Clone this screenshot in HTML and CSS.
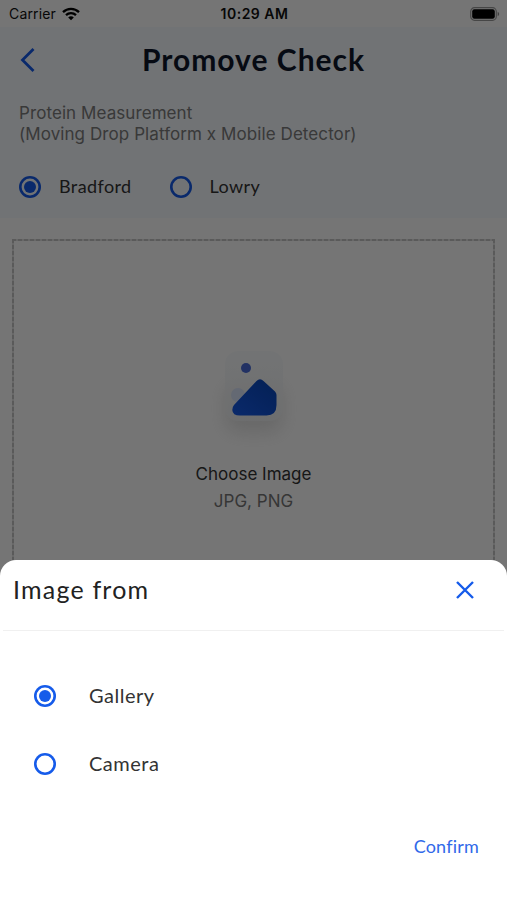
FILE: index.html
```html
<!DOCTYPE html>
<html lang="en">
<head>
    <meta charset="UTF-8">
    <meta name="viewport" content="width=device-width, initial-scale=1.0">
    <title>Promove Check</title>
    <link rel="stylesheet" href="styles.css">
</head>
<body>
    <div class="screen">
        <div class="status-bar">
            <div class="carrier">
                <span>Carrier</span>
                <svg width="18" height="14" viewBox="0 0 18 14" fill="none" stroke="#000" stroke-width="2.3">
                    <path d="M1 5.1C5.5 0.7 12.5 0.7 17 5.1"/>
                    <path d="M4 8.2C6.8 5.5 11.2 5.5 14 8.2"/>
                    <path d="M6.2 10.4C7.8 8.9 10.2 8.9 11.8 10.4L9 13.2Z" fill="#000" stroke="none"/>
                </svg>
            </div>
            <span class="time">10:29 AM</span>
            <svg class="battery" width="30" height="14" viewBox="0 0 30 14">
                <rect x="0.7" y="0.7" width="25.6" height="12.6" rx="3.8" fill="none" stroke="#000" stroke-opacity="0.4" stroke-width="1.2"/>
                <rect x="2.2" y="2.2" width="22.6" height="9.6" rx="2.2"/>
                <path d="M27.7 4.8C29.7 5.6 29.7 8.4 27.7 9.2Z" fill-opacity="0.45"/>
            </svg>
        </div>

        <div class="header">
            <div class="title-row">
                <svg class="back" width="16" height="24" viewBox="0 0 16 24" fill="none" stroke="#155bea" stroke-width="2.8">
                    <path d="M14.500 1L3.500 12L14.500 23"/>
                </svg>
                <h1>Promove Check</h1>
            </div>
            <p class="description">
                Protein Measurement<br>
                (Moving Drop Platform x Mobile Detector)
            </p>
            <div class="methods">
                <label class="option"><span class="radio checked"></span><span class="label">Bradford</span></label>
                <label class="option"><span class="radio"></span><span class="label">Lowry</span></label>
            </div>
        </div>

        <div class="upload">
            <svg class="picture" width="108" height="116" viewBox="0 0 108 116">
                <defs>
                    <linearGradient id="hill" x1="0" y1="1" x2="1" y2="0">
                        <stop offset="0" stop-color="#175be9"/>
                        <stop offset="1" stop-color="#0946b8"/>
                    </linearGradient>
                    <linearGradient id="paper" x1="0" y1="0" x2="0" y2="1">
                        <stop offset="0" stop-color="#f7fafc"/>
                        <stop offset="1" stop-color="#f0f2f4"/>
                    </linearGradient>
                    <filter id="blur" x="-50%" y="-50%" width="200%" height="200%">
                        <feGaussianBlur stdDeviation="9"/>
                    </filter>
                </defs>
                <rect x="26" y="40" width="56" height="47" rx="12" fill="#999" opacity="0.28" filter="url(#blur)"/>
                <rect x="25" y="6" width="58" height="70" rx="13" fill="url(#paper)" opacity="0.75"/>
                <circle cx="38" cy="50" r="7" fill="#dae4fa"/>
                <circle cx="46" cy="23" r="5" fill="#4a6cd8"/>
                <path d="M34 60L56.500 36Q60 32.500 63.500 36L75 46.500Q76.500 48 76.500 50V60Q76.500 70.500 66.500 70.500H40Q32.500 70.500 32.300 65Q32.300 62 34 60Z" fill="url(#hill)"/>
            </svg>
            <div class="upload-title">Choose Image</div>
            <div class="upload-types">JPG, PNG</div>
        </div>
    </div>

    <div class="overlay"></div>

    <div class="sheet">
        <div class="sheet-header">
            <h2>Image from</h2>
            <svg width="18" height="18" viewBox="0 0 18 18" fill="none" stroke="#155bea" stroke-width="2.4">
                <path d="M1 1L17 17M17 1L1 17"/>
            </svg>
        </div>
        <div class="sources">
            <label class="option"><span class="radio checked"></span><span class="label">Gallery</span></label>
            <label class="option"><span class="radio"></span><span class="label">Camera</span></label>
        </div>
        <div class="actions">
            <button class="confirm" type="button">Confirm</button>
        </div>
    </div>
</body>
</html>
```
FILE: styles.css
```css
* {
    margin: 0;
    padding: 0;
    box-sizing: border-box;
}

body {
    position: relative;
    height: 900px;
    overflow: hidden;
    background: #fff;
    font-family: "Lato", sans-serif;
}

svg {
    display: block;
    flex-shrink: 0;
}

.screen {
    height: 900px;
}

.status-bar {
    display: grid;
    grid-template-columns: 1fr auto 1fr;
    align-items: center;
    height: 27px;
    padding: 0 7px 0 9px;
    font-family: "Inter", sans-serif;
    font-size: 14px;
    letter-spacing: 0.15px;
    color: #111;
}

.carrier {
    display: flex;
    align-items: center;
    gap: 6px;
}

.time {
    font-weight: 600;
    letter-spacing: 0.5px;
}

.battery {
    justify-self: end;
}

.header {
    height: 191px;
    padding: 12px 19px 0;
    background: #f6fafe;
}

.title-row {
    display: grid;
    grid-template-columns: 16px 1fr 16px;
    align-items: center;
    height: 42px;
}

h1 {
    padding-bottom: 3px;
    text-align: center;
    font-size: 30px;
    font-weight: 700;
    letter-spacing: 1px;
    color: #0f172b;
}

.description {
    margin-top: 22px;
    font-family: "Inter", sans-serif;
    font-size: 17px;
    line-height: 21px;
    letter-spacing: 0.08px;
    white-space: nowrap;
    color: #7c7c7c;
}

.methods {
    display: flex;
    gap: 38px;
    margin-top: 31px;
}

.option {
    display: flex;
    align-items: center;
    gap: 18px;
    height: 22px;
    font-size: 18px;
    letter-spacing: 0.4px;
    color: #333;
}

.label {
    padding-bottom: 2px;
}

.radio {
    display: flex;
    align-items: center;
    justify-content: center;
    width: 22px;
    height: 22px;
    box-shadow: inset 0 0 0 2.6px #155bea;
    border-radius: 50%;
}

.radio.checked::after {
    content: "";
    width: 12px;
    height: 12px;
    border-radius: 50%;
    background: #155bea;
}

/* dashes are drawn with gradients, the native dashed border leaves wide gaps */
.upload {
    display: flex;
    flex-direction: column;
    align-items: center;
    height: 400px;
    margin: 21px 12px 0;
    padding-top: 106px;
    background:
        repeating-linear-gradient(90deg, #c4c4c4 0 4px, #e2e2e2 4px 6px) top / 100% 2px no-repeat,
        repeating-linear-gradient(180deg, #c4c4c4 0 4px, #e2e2e2 4px 6px) left / 2px 100% no-repeat,
        repeating-linear-gradient(180deg, #c4c4c4 0 4px, #e2e2e2 4px 6px) right / 2px 100% no-repeat;
    font-family: "Inter", sans-serif;
    font-size: 17px;
}

.upload-title {
    margin-top: 3px;
    line-height: 20px;
    color: #333;
}

.upload-types {
    margin-top: 7px;
    line-height: 20px;
    color: #777;
}

.overlay {
    position: absolute;
    inset: 0;
    background: rgba(0, 0, 0, 0.54);
}

.sheet {
    position: absolute;
    right: 0;
    bottom: 0;
    left: 0;
    height: 340px;
    border-radius: 16px 16px 0 0;
    background: #fff;
}

.sheet-header {
    display: flex;
    align-items: center;
    justify-content: space-between;
    height: 71px;
    margin: 0 3px;
    padding: 0 30px 11px 10px;
    border-bottom: 1px solid #f0f0f0;
}

h2 {
    padding-bottom: 2px;
    font-size: 25px;
    font-weight: 400;
    letter-spacing: 1.2px;
    color: #222;
}

.sources {
    display: flex;
    flex-direction: column;
    gap: 46px;
    padding: 54px 34px 0;
}

.sources .option {
    gap: 33px;
    font-size: 20px;
    letter-spacing: 0.5px;
}

.actions {
    display: flex;
    justify-content: flex-end;
    padding: 59px 28px 0;
}

.confirm {
    border: 0;
    background: none;
    font-family: "Lato", sans-serif;
    font-size: 18px;
    line-height: 24px;
    letter-spacing: 0.2px;
    color: #3169e9;
}
```
